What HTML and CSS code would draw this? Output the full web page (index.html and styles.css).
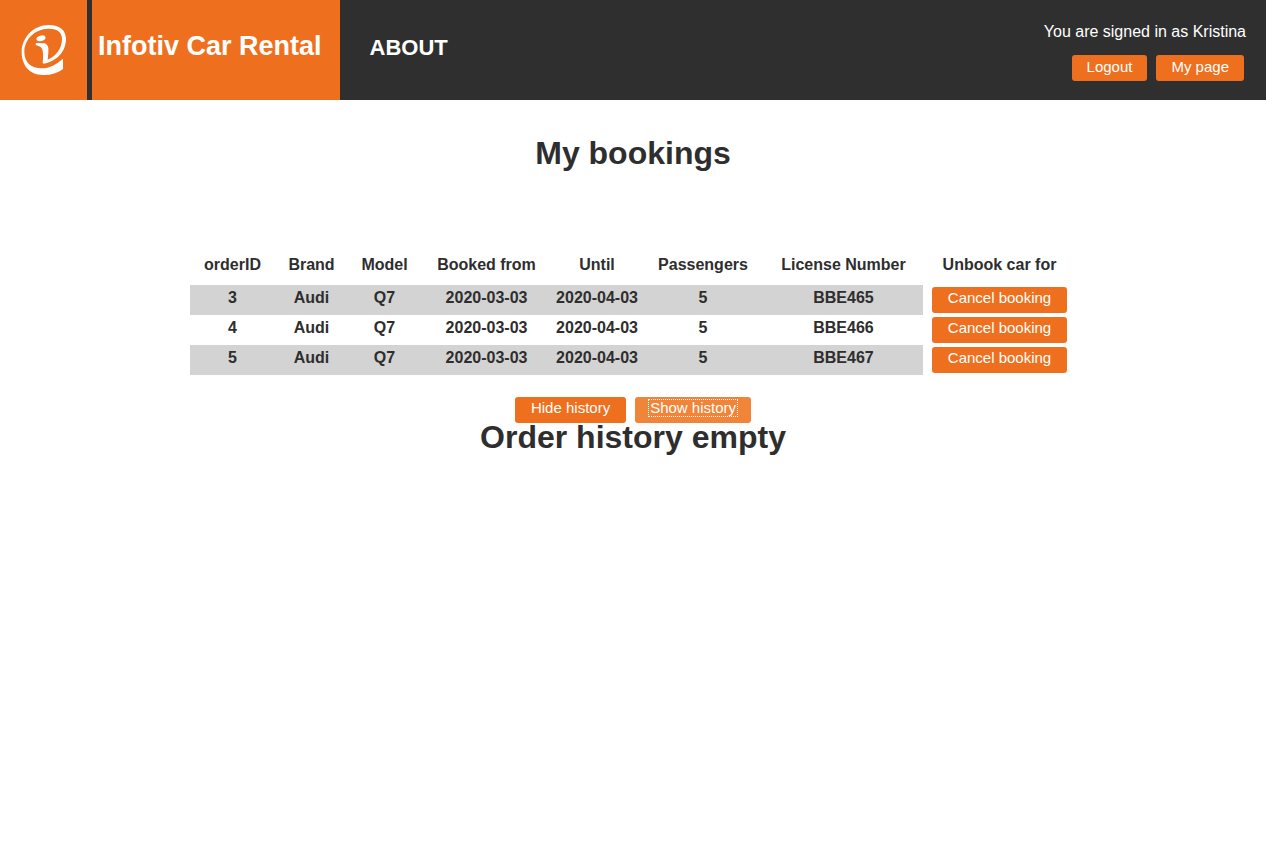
FILE: index.html
```html
<!DOCTYPE html>
<html lang="en">
<head>
  <meta charset="utf-8">
  <title>Infotiv Car Rental</title>
  <link rel="stylesheet" href="styles.css">
</head>
<body>
  <header class="topbar">
    <a class="logo" href="#" aria-label="Infotiv home">
      <svg class="logo-mark" viewBox="60 72 144 160" aria-hidden="true">
        <path fill="#fff" fill-rule="evenodd" d="M189 178V209C171 222 151 228 128 227C89 226 65 199 65 158C65 115 101 77 146 77C180 77 198 93 198 119C198 157 169 187 131 193L128 190C130 172 130 157 126 148C123 142 117 140 107 137L108 131L134 132C145 137 146 145 145 160L143 181C167 172 186 148 186 119C186 99 172 87 145 88C105 89 73 119 73 158C73 190 94 207 125 207C151 207 168 195 189 178Z"/>
        <ellipse cx="123" cy="117" rx="14" ry="8" fill="#fff" transform="rotate(-16 123 117)"/>
      </svg>
    </a>
    <h1 class="brand">Infotiv Car Rental</h1>
    <nav class="nav"><a class="nav-link" href="#">ABOUT</a></nav>
    <div class="account">
      <p class="account-text">You are signed in as Kristina</p>
      <div class="account-actions">
        <button class="button" type="button">Logout</button>
        <button class="button" type="button">My page</button>
      </div>
    </div>
  </header>
  <main class="content">
    <h2 class="heading">My bookings</h2>
    <table class="bookings">
      <colgroup>
        <col class="col-order"><col class="col-short"><col class="col-short"><col class="col-from">
        <col class="col-until"><col class="col-passengers"><col class="col-license"><col class="col-action">
      </colgroup>
      <thead>
        <tr><th>orderID</th><th>Brand</th><th>Model</th><th>Booked from</th><th>Until</th><th>Passengers</th><th>License Number</th><th>Unbook car for</th></tr>
      </thead>
      <tbody>
        <tr><td>3</td><td>Audi</td><td>Q7</td><td>2020-03-03</td><td>2020-04-03</td><td>5</td><td>BBE465</td><td class="action"><button class="button" type="button">Cancel booking</button></td></tr>
        <tr><td>4</td><td>Audi</td><td>Q7</td><td>2020-03-03</td><td>2020-04-03</td><td>5</td><td>BBE466</td><td class="action"><button class="button" type="button">Cancel booking</button></td></tr>
        <tr><td>5</td><td>Audi</td><td>Q7</td><td>2020-03-03</td><td>2020-04-03</td><td>5</td><td>BBE467</td><td class="action"><button class="button" type="button">Cancel booking</button></td></tr>
      </tbody>
    </table>
    <div class="history-actions">
      <button class="button" type="button">Hide history</button>
      <button class="button button-active" type="button"><span class="focus-ring">Show history</span></button>
    </div>
    <h2 class="heading">Order history empty</h2>
  </main>
</body>
</html>
```
FILE: styles.css
```css
* {
  box-sizing: border-box;
}

body {
  margin: 0;
  padding-right: 14px;
  background: #fff;
  color: #2e2e2e;
  font-family: "Liberation Sans", Arial, Helvetica, sans-serif;
  font-size: 16px;
}

.topbar {
  display: flex;
  min-height: 100px;
  background: #2f2f2f;
  color: #fff;
}

.logo {
  display: flex;
  align-items: center;
  justify-content: center;
  width: 87px;
  background: #ee701e;
}

.logo-mark {
  width: 48px;
  height: 54px;
}

.brand {
  margin: 0 0 0 5px;
  padding: 30px 18px 0 6px;
  background: #ee701e;
  font-size: 27px;
  line-height: 32px;
  white-space: nowrap;
}

.nav {
  padding: 36px 30px 0;
}

.nav-link {
  color: #fff;
  font-size: 22px;
  font-weight: bold;
  line-height: 24px;
  text-decoration: none;
}

.account {
  margin-left: auto;
  padding: 22px 20px 0 0;
}

.account-text {
  margin: 0;
  line-height: 20px;
}

.account-actions {
  display: flex;
  justify-content: flex-end;
  gap: 9px;
  padding: 13px 2px 0 0;
}

.button {
  height: 26px;
  padding: 0 15px 2px;
  border: 0;
  border-radius: 3px;
  background: #ee701e;
  color: #fff;
  font-family: inherit;
  font-size: 15px;
  line-height: 20px;
  white-space: nowrap;
  cursor: pointer;
}

.content .button {
  padding: 0 16px 4px;
}

.content .button-active {
  padding: 0 13px 4px;
  background: #f08438;
}

.focus-ring {
  display: block;
  padding: 0 1px;
  border: 1px dotted #fff;
  line-height: 16px;
}

.content {
  display: flex;
  flex-direction: column;
  align-items: center;
  padding-top: 35px;
}

.heading {
  margin: 0;
  font-size: 32px;
  line-height: 36px;
}

.bookings {
  margin-top: 74px;
  table-layout: fixed;
  width: 886px;
  border-collapse: collapse;
  font-weight: bold;
  text-align: center;
}

.col-order { width: 85px; }
.col-short { width: 73px; }
.col-from { width: 131px; }
.col-until { width: 90px; }
.col-passengers { width: 122px; }
.col-license { width: 159px; }
.col-action { width: 153px; }

.bookings th {
  height: 40px;
  padding: 0;
}

.bookings td {
  height: 30px;
  padding: 3px 0 0;
  line-height: 20px;
  vertical-align: top;
}

.bookings tbody tr:nth-child(odd) td {
  background: #d3d3d3;
}

.bookings tbody tr td.action {
  padding: 2px 0;
  background: #fff;
}

.action .button {
  display: block;
  margin: 0 auto;
}

.history-actions {
  display: flex;
  gap: 9px;
  margin-top: 22px;
}

.history-actions + .heading {
  margin-top: -4px;
}
```
